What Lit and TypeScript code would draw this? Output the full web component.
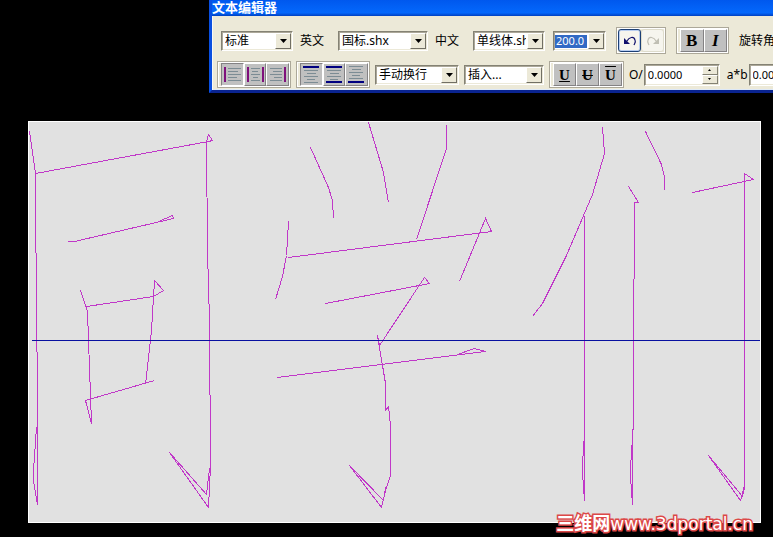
import { LitElement, html, css, svg } from "lit";
import { customElement } from "lit/decorators.js";

type Bar = [number, number, number, number, string];

// Text rows shared by the justification icons: x, y, width, height, fill
const lines = (kind: string): Bar[] => {
  const grey = "#7c8c94";
  const purple = "#80107c";
  const navy = "#000080";
  const widths = [12, 9, 12, 8, 12];
  const row = (y: number, w: number, i: number): Bar => {
    if (kind === "left") return [5, y, w + 1, 1, grey];
    if (kind === "right") return [14 - w, y, w, 1, grey];
    const c = kind === "center" ? Math.max(4, w - 3) : w + (i % 2 ? 0 : 2);
    return [9 - Math.floor(c / 2), y, c, 1, grey];
  };
  const startY = kind === "top" ? 5 : kind === "bottom" ? 1 : kind === "middle" ? 5 : 3;
  const count = kind === "middle" ? 4 : 5;
  const out = widths.slice(0, count).map((w, i) => row(startY + i * 3, w, i));
  if (kind === "left" || kind === "center") out.push([1, 2, 2, 15, purple]);
  if (kind === "right" || kind === "center") out.push([16, 2, 2, 15, purple]);
  if (kind === "top" || kind === "middle") out.push([1, 1, 16, 2, navy]);
  if (kind === "middle" || kind === "bottom") out.push([1, 16, 16, 2, navy]);
  return out;
};

// Single-line strokes in drawing coordinates
const STROKES = [
  "29,131 35,173 35,250 36,255 36,320 37,383 37,504 33,480 33,470 36,427",
  "35,173 208,141 212,140 208,134 206,141 207,250 209,320 210,466 208,507 169,452 206,494 209,468",
  "67,241 74,241 173,218 172,215 158,221",
  "80,290 87,311 88,340 91,423 85,400 154,380",
  "86,306 153,296 163,290 154,280 151,330 145,384",
  "310,147 328,187 332,200 333,218",
  "368,122 383,172 388,202",
  "446,124 446,148 416,239",
  "288,221 286,255 282,276 275,299",
  "288,257 491,231 485,218 459,281",
  "325,303 429,283 424,277 379,345 377,335 382,365 385,383 385,410 388,406 390,425 390,475 386,487 381,507 349,465 383,500 385,487",
  "277,377 485,351 474,348 457,354",
  "602,127 604,153 592,194 566,255 542,303 532,316",
  "584,215 584,500 582,472 583,441",
  "645,131 661,164 664,177 664,189",
  "628,186 638,202 634,202 634,277 633,280 633,428 632,430 632,504 630,476 631,444",
  "692,192 753,179 744,173 744,485 740,500 708,455 742,496 744,487",
];

@customElement("app-root")
export class AppRoot extends LitElement {
  static styles = css`
    :host {
      display: block;
      position: relative;
      min-height: 100vh;
      overflow: hidden;
      background: #000;
      color: #000;
      font: 12px/16px "Noto Sans", "Noto Sans CJK SC", sans-serif;
    }
    * {
      box-sizing: border-box;
    }
    .editor {
      margin-left: 209px;
      border-left: 3px solid #0a4fe0;
      border-bottom: 3px solid #0a2490;
      background: #ece9d8;
      overflow: hidden;
    }
    .title {
      height: 16px;
      margin: 0;
      background: linear-gradient(#0058ee, #0468fc 80%, #0040c0);
      color: #fff;
      font-family: "Noto Sans CJK SC", sans-serif;
      font-size: 13px;
      line-height: 14px;
      font-weight: 700;
      white-space: nowrap;
    }
    .bars {
      display: flex;
      flex-direction: column;
      gap: 7px;
      padding: 11px 0 2px 5px;
      box-shadow: inset 1px 0 #f8f8f4, inset 0 -1px #dce8f8;
    }
    .bar {
      display: flex;
      align-items: center;
      height: 27px;
      white-space: nowrap;
    }
    .bar > *,
    .set > * {
      flex: none;
    }
    .styles {
      gap: 10px;
      padding-left: 4px;
    }
    .layout {
      gap: 5px;
    }
    .set {
      display: flex;
      align-items: center;
    }
    .spaced {
      gap: 8px;
    }
    .name {
      padding: 0 14px 0 7px;
    }
    .sunk {
      display: flex;
      height: 20px;
      background: #fff;
      border: 1px solid;
      border-color: #848274 #fff #fff #848274;
      box-shadow: inset 1px 1px #aca899, inset -1px -1px #ece9d8;
      position: relative;
    }
    select,
    input {
      appearance: none;
      border: 0;
      border-radius: 0;
      margin: 0;
      outline: 0;
      background: transparent;
      color: #000;
      font: inherit;
      padding: 0 0 0 3px;
      width: 100%;
      min-width: 0;
    }
    select {
      padding-right: 18px;
      text-overflow: clip;
    }
    .arrow {
      position: absolute;
      right: 1px;
      top: 1px;
      bottom: 1px;
      width: 16px;
      display: grid;
      place-items: center;
      padding: 0;
      pointer-events: none;
      background: #ece9d8;
      border: 1px solid;
      border-color: #fff #716f64 #716f64 #fff;
    }
    .w53 {
      width: 53px;
    }
    .w72 {
      width: 72px;
    }
    .w80 {
      width: 80px;
    }
    .w84 {
      width: 84px;
    }
    .w90 {
      width: 90px;
    }
    .size {
      padding: 3px 18px 2px 1px;
      font-size: 11px;
    }
    .size input {
      padding: 0 0 0 1px;
      background: #316ac5;
      color: #fff;
    }
    .number {
      width: 76px;
      height: 22px;
      font-size: 11px;
    }
    .spin {
      display: grid;
      grid-template-rows: 1fr 1fr;
      flex: none;
      width: 16px;
      margin: 1px;
    }
    .spin button {
      display: grid;
      place-items: center;
      padding: 0;
      background: #ece9d8;
      border: 1px solid;
      border-color: #fff #848274 #848274 #fff;
    }
    .group {
      display: flex;
      height: 27px;
      padding: 1px;
      border: 1px solid #aca899;
      box-shadow: inset 0 0 0 1px #fff;
    }
    .group button {
      display: grid;
      place-items: center;
      flex: 1;
      padding: 0;
      color: #000;
      background: #c0c0c0;
      border: 1px solid;
      border-color: #fff #848284 #848284 #fff;
      font: 700 15px/20px "Liberation Serif", serif;
    }
    .justify {
      width: 74px;
      padding: 1px 1px 1px 3px;
    }
    .justify .pressed {
      border-color: #848284 #fff #fff #848284;
    }
    .history {
      width: 50px;
    }
    .history button {
      background: #f6f5ee;
      border: 1px solid #dedccc;
      border-radius: 3px;
    }
    .history .active {
      border: 1px solid #1c3f74;
      box-shadow: inset 0 0 0 1px #b8cdf0;
    }
    .weight {
      width: 53px;
      padding-left: 3px;
    }
    .weight button {
      font-size: 17px;
    }
    .weight .italic {
      font-style: italic;
    }
    .decor {
      width: 75px;
      padding-left: 3px;
    }
    .decor button {
      text-decoration-thickness: 1px;
    }
    .under {
      text-decoration: underline;
    }
    .strike {
      text-decoration: line-through;
    }
    .over {
      text-decoration: overline;
    }
    .value {
      gap: 1px;
    }
    .value + .value {
      padding-left: 2px;
    }
    svg {
      display: block;
    }
    .canvas {
      position: relative;
      margin: 28px 12px 0 28px;
    }
    .drawing {
      width: 100%;
      border: 1px solid #fff;
      background: #e1e1e1;
      fill: none;
      stroke: #c038c8;
      shape-rendering: crispEdges;
    }
    .axis {
      stroke: #0810a0;
    }
    .site {
      position: absolute;
      right: 8px;
      bottom: -13px;
      color: #fff;
      font: 17px/24px "DejaVu Sans", "Noto Sans CJK SC", sans-serif;
      text-decoration: none;
      white-space: nowrap;
      -webkit-text-stroke: 3px #dc4848;
      paint-order: stroke fill;
    }
    .site .cn {
      font-size: 18px;
      font-weight: 700;
    }
  `;

  private arrow() {
    return html`<span class="arrow"><svg width="7" height="4" aria-hidden="true"><path d="M0 0h7L3.500 4z" /></svg></span>`;
  }

  private pick(label: string, value: string, width: string) {
    return html`<div class="sunk ${width}">
      <select aria-label=${label}><option>${value}</option></select>${this.arrow()}
    </div>`;
  }

  private justify(kinds: string[]) {
    return html`<div class="group justify">
      ${kinds.map(
        (k, i) => html`<button class=${i === 0 ? "pressed" : ""} aria-label=${k}>
          <svg width="19" height="19" shape-rendering="crispEdges">
            ${lines(k).map(([x, y, w, h, f]) => svg`<rect x=${x} y=${y} width=${w} height=${h} fill=${f} />`)}
          </svg>
        </button>`
      )}
    </div>`;
  }

  private number(id: string, label: string) {
    return html`<div class="set value">
      <label for=${id}>${label}</label>
      <div class="sunk number">
        <input id=${id} value="0.0000" />
        <div class="spin">
          <button aria-label="增加"><svg width="3" height="2"><path d="M0 2h3L1.500 0z" /></svg></button>
          <button aria-label="减少"><svg width="3" height="2"><path d="M0 0h3L1.500 2z" /></svg></button>
        </div>
      </div>
    </div>`;
  }

  private turn(color: string, flip: boolean) {
    return html`<svg width="14" height="10" viewBox="0 0 14 10">
      <g transform=${flip ? "translate(14 0) scale(-1 1)" : ""}>
        <path d="M1 2v6h6z" fill=${color} />
        <path d="M4 5C6 1 11 0 12 4C13 6 12 7 11 9" fill="none" stroke=${color} stroke-width="1.200" />
      </g>
    </svg>`;
  }

  render() {
    return html`
      <section class="editor">
        <h1 class="title">文本编辑器</h1>
        <div class="bars">
          <div class="bar styles">
            <div class="set spaced">
              <div class="set">
                ${this.pick("样式", "标准", "w72")}
                <span class="name">英文</span>${this.pick("英文", "国标.shx", "w90")}
                <span class="name">中文</span>${this.pick("中文", "单线体.shx", "w72")}
              </div>
              <div class="sunk size w53"><input aria-label="字高" value="200.0" />${this.arrow()}</div>
            </div>
            <div class="group history">
              <button class="active" aria-label="撤销">${this.turn("#10106c", false)}</button>
              <button aria-label="重做">${this.turn("#c0bfb4", true)}</button>
            </div>
            <div class="group weight">
              <button>B</button>
              <button class="italic">I</button>
            </div>
            <span>旋转角</span>
          </div>
          <div class="bar layout">
            ${this.justify(["left", "center", "right"])} ${this.justify(["top", "middle", "bottom"])}
            ${this.pick("换行", "手动换行", "w84")} ${this.pick("插入", "插入...", "w80")}
            <div class="group decor">
              <button class="under">U</button>
              <button class="strike">U</button>
              <button class="over">U</button>
            </div>
            ${this.number("oblique", "O/")} ${this.number("tracking", "a*b")}
          </div>
        </div>
      </section>
      <main class="canvas">
        <svg class="drawing" viewBox="29 122 731 400" role="img" aria-label="同学们">
          <g transform="translate(0.500 0.500)">
            ${STROKES.map((p) => svg`<polyline points=${p} />`)}
            <path class="axis" d="M31 340H760" />
          </g>
        </svg>
        <a class="site" href="http://www.3dportal.cn"><span class="cn">三维网</span>www.3dportal.cn</a>
      </main>
    `;
  }
}
